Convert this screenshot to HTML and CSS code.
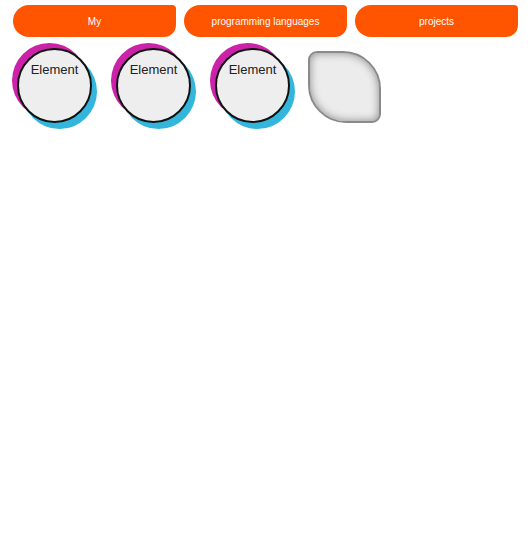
FILE: index.html
```html
<!DOCTYPE html>
<html>
<head>
<meta charset="utf-8">
<link rel="stylesheet" href="styles.css">
</head>
<body>
<nav class="nav">
  <a class="nav-btn">My</a>
  <a class="nav-btn">programming languages</a>
  <a class="nav-btn">projects</a>
</nav>
<div class="row">
  <div class="bubble">Element</div>
  <div class="bubble">Element</div>
  <div class="bubble">Element</div>
  <div class="leaf"></div>
</div>
</body>
</html>
```
FILE: styles.css
```css
html, body {
  margin: 0;
  padding: 0;
  background: #fff;
  font-family: "Liberation Sans", Arial, sans-serif;
}
.nav {
  display: flex;
  gap: 8px;
  padding: 5px 0 0 13px;
}
.nav-btn {
  width: 163px;
  height: 32px;
  background: #ff5400;
  color: #fff;
  font-size: 10px;
  display: flex;
  align-items: center;
  justify-content: center;
  border-radius: 16px 4px 12px 16px;
}
.row {
  display: flex;
  align-items: flex-start;
  padding: 11px 0 20px 17px;
  gap: 24px;
}
.bubble {
  box-sizing: border-box;
  width: 75px;
  height: 75px;
  border: 2px solid #111;
  border-radius: 50%;
  background: #eeeeee;
  box-shadow: -5px -5px 0 #cc22aa, 5px 6px 0 #33b5dc;
  text-align: center;
  font-size: 13px;
  color: #222;
  padding-top: 12px;
}
.leaf {
  box-sizing: border-box;
  width: 73px;
  height: 72px;
  margin: 3px 0 0 -6px;
  border: 2px solid #8a8a8a;
  background: #ececec;
  border-radius: 9px 38px 9px 38px;
  box-shadow: inset 0 0 8px #888;
}
```
